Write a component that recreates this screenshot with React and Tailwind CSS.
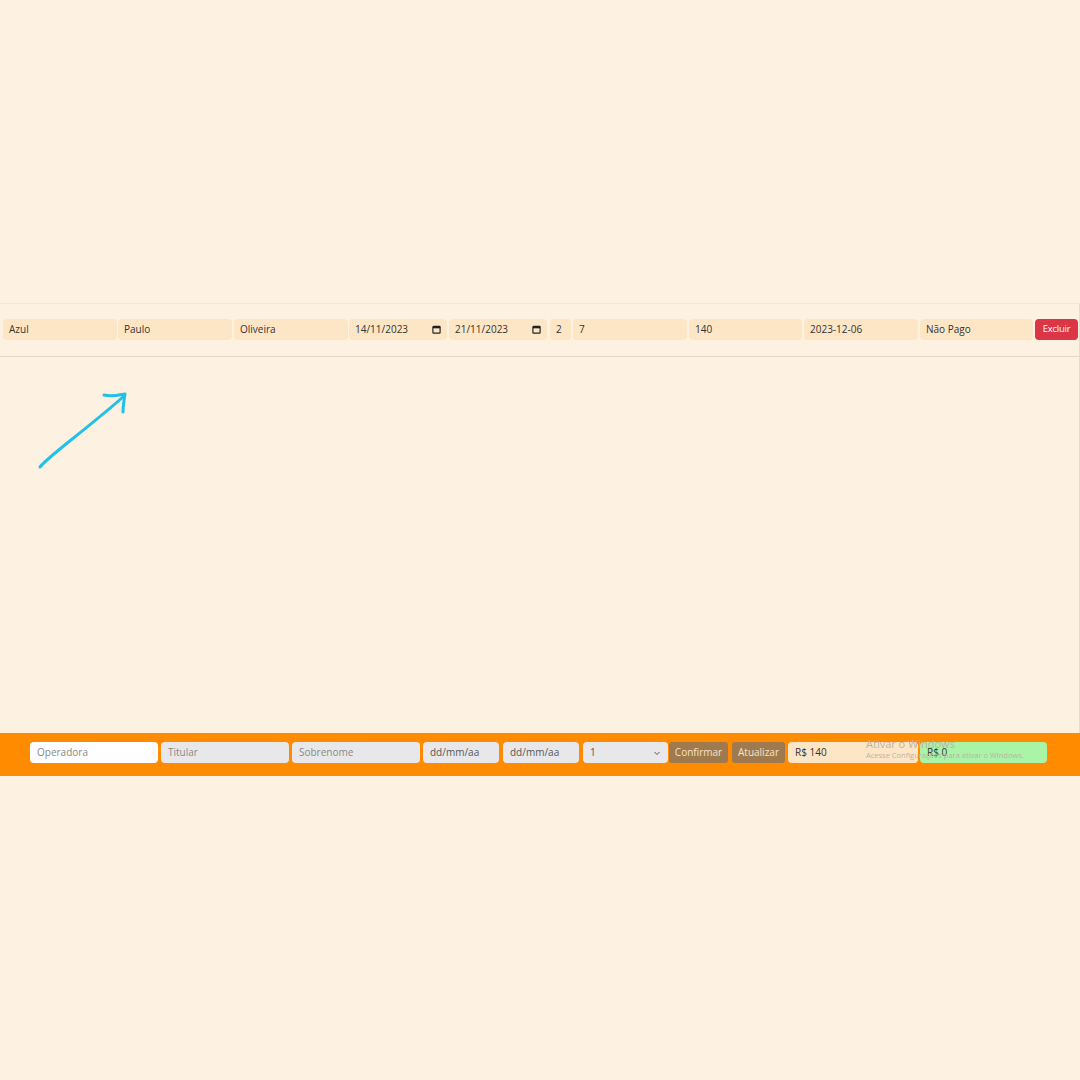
const rowFields = [
  { value: 'Azul', cls: 'w-[114px]' },
  { value: 'Paulo', cls: 'w-[114px] ml-[1px]' },
  { value: 'Oliveira', cls: 'w-[114px] ml-[2px]' },
  { value: '14/11/2023', cls: 'w-[98px] ml-[1px]', date: true },
  { value: '21/11/2023', cls: 'w-[98px] ml-[2px]', date: true },
  { value: '2', cls: 'w-[21px] ml-[3px]' },
  { value: '7', cls: 'w-[114px] ml-[2px]' },
  { value: '140', cls: 'w-[113px] ml-[2px]' },
  { value: '2023-12-06', cls: 'w-[114px] ml-[2px]' },
  { value: 'Não Pago', cls: 'w-[113px] ml-[2px]' },
]

function CalendarIcon() {
  return (
    <svg width="9" height="9" viewBox="0 0 10 10" className="shrink-0">
      <rect x="1" y="1.5" width="8" height="7.5" rx="0.8" fill="none" stroke="#222" strokeWidth="1.3" />
      <rect x="1" y="1.5" width="8" height="2.2" fill="#222" />
    </svg>
  )
}

export default function App() {
  return (
    <div className="w-[1080px] h-[1080px] bg-[#fdf1e1] flex flex-col text-[10px] text-[#333]" style={{ fontFamily: '"Open Sans", "Liberation Sans", sans-serif' }}>
      <div className="h-[303px] shrink-0" />

      <div className="h-[430px] shrink-0 border-t border-[#f6e7d3] border-r border-r-[#e8dccb] relative">
        <div className="h-[53px] border-b border-[#e6d6c3] flex items-center pl-[3px] pb-[1px]">
          {rowFields.map((f, i) => (
            <div key={i} className={`${f.cls} h-[21px] rounded-[4px] bg-[#fde6c6] flex items-center justify-between px-[6px] shrink-0`}>
              <span>{f.value}</span>
              {f.date && <CalendarIcon />}
            </div>
          ))}
          <button className="w-[43px] h-[21px] ml-[2px] rounded-[4px] bg-[#dc3545] text-white text-[9.5px] shrink-0 tracking-tight">Excluir</button>
        </div>

        <svg className="absolute left-[36px] top-[86px]" width="95" height="82" viewBox="0 0 95 82">
          <path d="M4 77 C 8 72, 20 62, 35 50 C 55 34, 75 18, 88 6" fill="none" stroke="#22c0e8" strokeWidth="3" strokeLinecap="round" />
          <path d="M68 5 C 76 7, 83 5, 89 4 C 88 10, 87 16, 87 22" fill="none" stroke="#22c0e8" strokeWidth="3" strokeLinecap="round" strokeLinejoin="round" />
        </svg>
      </div>

      <div className="h-[43px] shrink-0 bg-[#ff8c00] flex items-start pt-[9px] pl-[30px] relative">
        <div className="w-[128px] h-[21px] rounded-[4px] bg-white px-[7px] flex items-center text-[#888]">Operadora</div>
        <div className="w-[128px] h-[21px] rounded-[4px] bg-[#e8e8ea] px-[7px] flex items-center text-[#888] ml-[3px]">Titular</div>
        <div className="w-[128px] h-[21px] rounded-[4px] bg-[#e8e8ea] px-[7px] flex items-center text-[#888] ml-[3px]">Sobrenome</div>
        <div className="w-[76px] h-[21px] rounded-[4px] bg-[#e8e8ea] px-[7px] flex items-center text-[#555] ml-[3px]">dd/mm/aa</div>
        <div className="w-[76px] h-[21px] rounded-[4px] bg-[#e8e8ea] px-[7px] flex items-center text-[#555] ml-[4px]">dd/mm/aa</div>
        <div className="w-[85px] h-[21px] rounded-[4px] bg-[#e8e8ea] px-[7px] flex items-center justify-between text-[#555] ml-[4px]">
          <span>1</span>
          <svg width="8" height="8" viewBox="0 0 8 8"><path d="M1.5 3 L4 5.5 L6.5 3" fill="none" stroke="#555" strokeWidth="1" /></svg>
        </div>
        <button className="w-[59px] h-[21px] rounded-[3px] bg-[#9e7a4e] text-[#f7e3c6] ml-[1px]">Confirmar</button>
        <button className="w-[53px] h-[21px] rounded-[3px] bg-[#9e7a4e] text-[#f7e3c6] ml-[4px]">Atualizar</button>
        <div className="w-[130px] h-[21px] rounded-[4px] bg-[#fde6c6] px-[7px] flex items-center text-[#333] ml-[3px]">R$ 140</div>
        <div className="w-[127px] h-[21px] rounded-[4px] bg-[#aaf4a8] px-[7px] flex items-center text-[#333] ml-[2px]">R$ 0</div>

        <div className="absolute left-[866px] top-[4px] text-[#bdb2a3] leading-tight pointer-events-none">
          <div className="text-[11px]">Ativar o Windows</div>
          <div className="text-[7.5px]">Acesse Configurações para ativar o Windows.</div>
        </div>
      </div>

      <div className="flex-1" />
    </div>
  )
}
